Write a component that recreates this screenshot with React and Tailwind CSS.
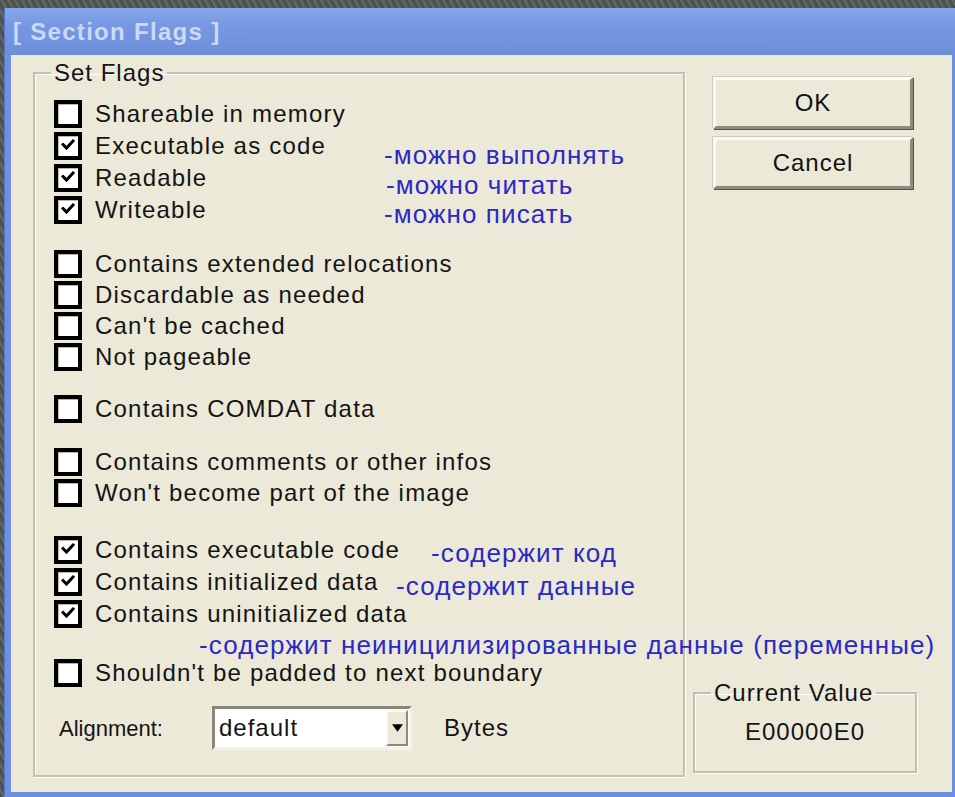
import React from "react";

// Small bold tick used inside checked boxes
function Tick() {
  return (
    <svg viewBox="0 0 14 14" className="w-[14px] h-[14px] -mt-[2px] -ml-[1px]">
      <path d="M2 6.5 L5.5 10 L12 3" fill="none" stroke="#000" strokeWidth="3" strokeLinecap="square" />
    </svg>
  );
}

function Checkbox({ checked }) {
  return (
    <span className="flex items-center justify-center w-[28px] h-[28px] shrink-0 border-[4px] border-black bg-white shadow-[inset_1px_1px_0_#b9b7aa]">
      {checked && <Tick />}
    </span>
  );
}

function FlagRow({ label, checked, h, note, noteCls }) {
  return (
    <div className={`relative flex items-center gap-[13px] pl-[3px] ${h}`}>
      <Checkbox checked={checked} />
      <span className="whitespace-nowrap">{label}</span>
      {note && (
        <span className={`absolute whitespace-nowrap text-[#2a2ac6] text-[26px] tracking-[1.1px] ${noteCls}`}>
          {note}
        </span>
      )}
    </div>
  );
}

const groups = [
  {
    gap: "mt-0",
    h: "h-[32px]",
    rows: [
      { label: "Shareable in memory" },
      { label: "Executable as code", checked: true, note: "-можно выполнять", noteCls: "left-[333px] top-[6px]" },
      { label: "Readable", checked: true, note: "-можно читать", noteCls: "left-[335px] top-[4px]" },
      { label: "Writeable", checked: true, note: "-можно писать", noteCls: "left-[333px] top-[1px]" },
    ],
  },
  {
    gap: "mt-[22px]",
    h: "h-[31px]",
    rows: [
      { label: "Contains extended relocations" },
      { label: "Discardable as needed" },
      { label: "Can't be cached" },
      { label: "Not pageable" },
    ],
  },
  {
    gap: "mt-[21px]",
    h: "h-[31px]",
    rows: [{ label: "Contains COMDAT data" }],
  },
  {
    gap: "mt-[22px]",
    h: "h-[31px]",
    rows: [{ label: "Contains comments or other infos" }, { label: "Won't become part of the image" }],
  },
  {
    gap: "mt-[26px]",
    h: "h-[32px]",
    rows: [
      { label: "Contains executable code", checked: true, note: "-содержит код", noteCls: "left-[380px] top-[0px]" },
      { label: "Contains initialized data", checked: true, note: "-содержит данные", noteCls: "left-[345px] top-[1px]" },
      { label: "Contains uninitialized data", checked: true },
    ],
  },
];

function Button({ children }) {
  return (
    <button className="w-[200px] h-[52px] bg-[#ece9d8] border-[3px] border-t-[#fbfaf6] border-l-[#fbfaf6] border-r-[#8e8b7c] border-b-[#8e8b7c] shadow-[1px_1px_0_#55534a,-1px_-1px_0_#cfccbb] text-[24px] tracking-[1px] text-[#111]">
      {children}
    </button>
  );
}

export default function App() {
  return (
    <div className="w-[955px] h-[797px] overflow-hidden pt-[8px] pl-[4px] bg-[#565b57] bg-[repeating-linear-gradient(62deg,#4b504c_0px,#4b504c_2px,#6c726d_3px,#5a5f5b_4px,#515652_6px)] font-['Liberation_Sans',Arial,sans-serif]">
      <div className="flex flex-col h-[789px] bg-[#6f90df] pl-[6px] pr-[3px] pb-[5px] border-l border-[#5677cf]">
        {/* caption */}
        <div className="h-[47px] -ml-[6px] -mr-[3px] pl-[8px] flex items-center bg-[linear-gradient(180deg,#86a6ea_0%,#7799e3_35%,#6c8ed9_100%)]">
          <span className="text-[24px] font-bold tracking-[1.3px] text-[#cbd9f6] pt-[1px]">[ Section Flags ]</span>
        </div>

        {/* client area */}
        <div className="flex-1 flex bg-[#ece9d8] pt-[7px] pl-[22px] text-[24px] tracking-[1.2px] text-[#141414]">
          <fieldset className="w-[652px] h-[715px] border-2 border-[#c3c0ae] shadow-[inset_1px_1px_0_#fff,1px_1px_0_#fff] pl-[16px] pt-[14px] pb-0 min-w-0">
            <legend className="px-[3px] leading-[22px] h-[22px] tracking-[1px]">Set Flags</legend>

            {groups.map((g, gi) => (
              <div key={gi} className={`flex flex-col ${g.gap}`}>
                {g.rows.map((r) => (
                  <FlagRow key={r.label} h={g.h} {...r} />
                ))}
              </div>
            ))}

            <div className="relative h-[28px] pl-[148px] flex items-center">
              <span className="whitespace-nowrap text-[#2a2ac6] text-[26px] tracking-[1.1px] pt-[2px]">
                -содержит неиницилизированные данные (переменные)
              </span>
            </div>
            <FlagRow h="h-[30px]" label="Shouldn't be padded to next boundary" />

            <div className="mt-[18px] flex items-center h-[44px]">
              <span className="w-[161px] pl-[8px] shrink-0 text-[22px] tracking-[0px]">Alignment:</span>
              <div className="w-[200px] h-[44px] flex bg-white border-[3px] border-t-[#8a877a] border-l-[#8a877a] border-r-[#f4f2ea] border-b-[#f4f2ea]">
                <span className="flex-1 pl-[4px] flex items-center tracking-[1px]">default</span>
                <span className="w-[22px] my-[1px] mr-[1px] flex items-center justify-center bg-[#ece9d8] border-[2px] border-t-[#fbfaf6] border-l-[#fbfaf6] border-r-[#8e8b7c] border-b-[#8e8b7c]">
                  <svg viewBox="0 0 10 7" className="w-[11px] h-[8px]">
                    <path d="M0 0 H10 L5 7 Z" fill="#000" />
                  </svg>
                </span>
              </div>
              <span className="ml-[32px] tracking-[1px]">Bytes</span>
            </div>
          </fieldset>

          <div className="ml-[8px] w-[224px] flex flex-col pt-[15px] pb-[19px]">
            <div className="pl-[20px] flex flex-col gap-[8px]">
              <Button>OK</Button>
              <Button>Cancel</Button>
            </div>
            <fieldset className="mt-auto h-[91px] border-2 border-[#c3c0ae] shadow-[inset_1px_1px_0_#fff,1px_1px_0_#fff] pl-[16px] min-w-0">
              <legend className="px-[3px] leading-[22px] h-[22px] tracking-[1px]">Current Value</legend>
              <div className="flex justify-center pt-[10px] pr-[16px] tracking-[1px]">E00000E0</div>
            </fieldset>
          </div>
        </div>
      </div>
    </div>
  );
}
